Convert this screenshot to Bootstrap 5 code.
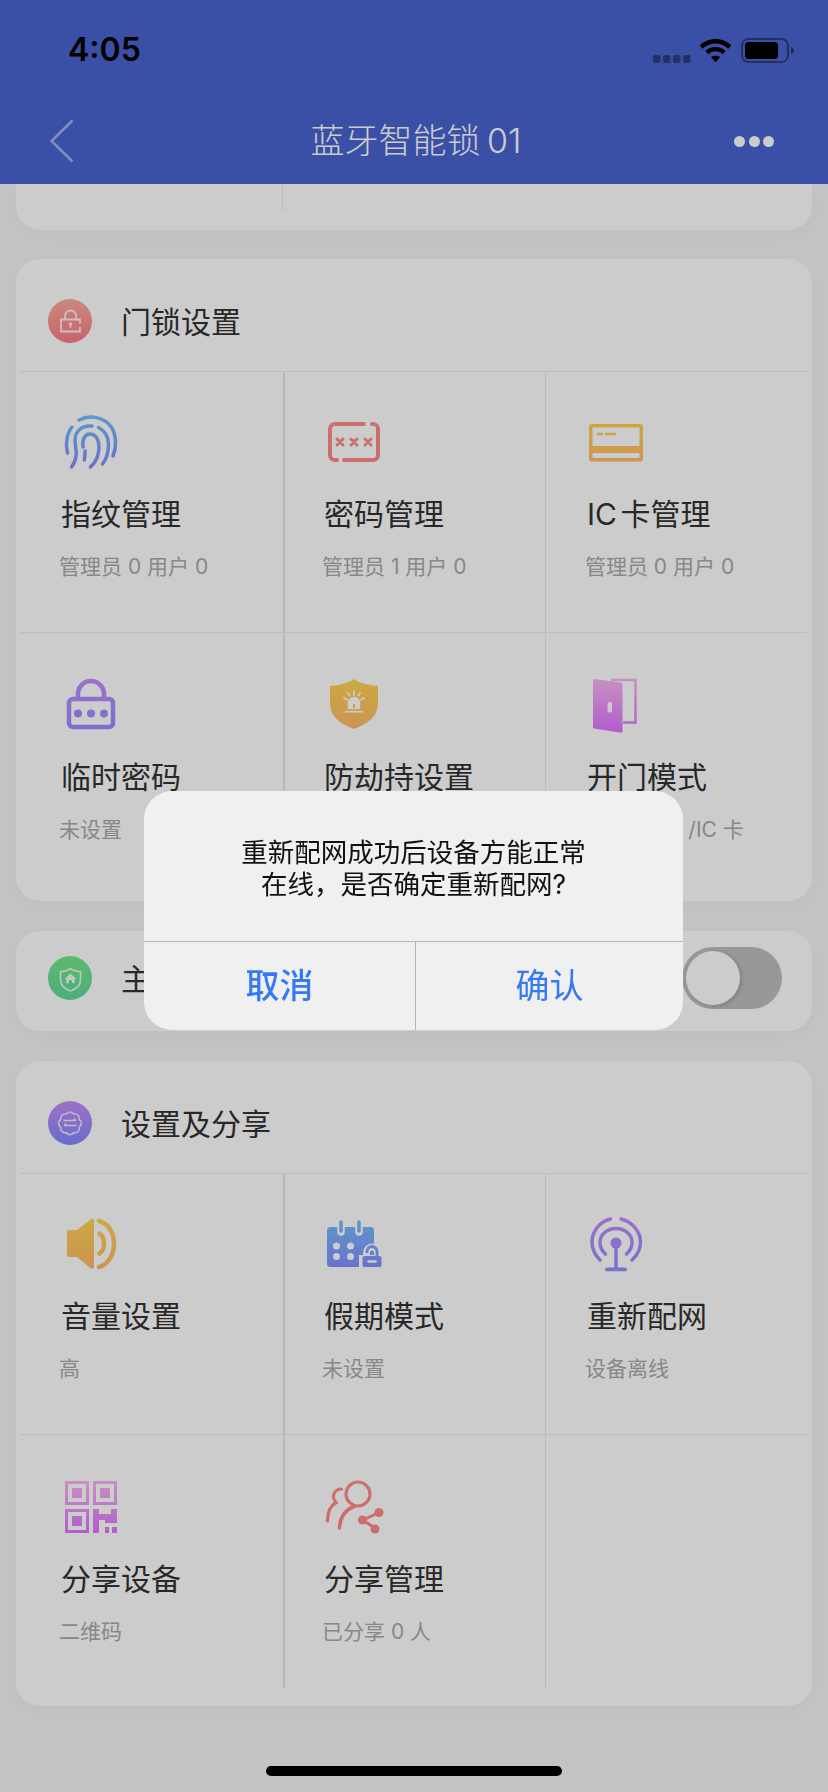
<!DOCTYPE html>
<html lang="zh-CN">
<head>
  <meta charset="UTF-8">
  <meta name="viewport" content="width=device-width, initial-scale=1.0">
  <title>蓝牙智能锁01</title>
  <link href="https://cdn.jsdelivr.net/npm/bootstrap@5.3.0/dist/css/bootstrap.min.css" rel="stylesheet">
  <style>
    html, body {
      margin: 0;
      height: 1792px;
    }
    body {
      position: relative;
      overflow: hidden;
      background: #f5f5f8;
      font-family: Inter, "Noto Sans CJK SC", sans-serif;
      color: #333;
    }
    .app-head {
      height: 184px;
      background: #4865d0;
      color: #fff;
    }
    .status-row {
      height: 100px;
      padding: 0 34px 0 68px;
    }
    .clock {
      font-size: 32px;
      font-weight: 600;
      color: #000;
      line-height: 1;
    }
    .nav-row {
      height: 84px;
      padding: 0 54px 2px 50px;
    }
    .nav-back {
      width: 48px;
    }
    .nav-title {
      font-size: 34px;
      font-weight: 300;
      line-height: 1.2;
      word-spacing: -3px;
    }
    .dot-menu {
      width: 40px;
      height: 11px;
    }
    .dot-menu span {
      width: 11px;
      height: 11px;
      background: #fff;
    }
    .panel {
      margin: 0 16px;
      border: 0;
      border-radius: 24px;
      background: #fff;
      box-shadow: 0 4px 22px rgba(0, 0, 0, .03);
    }
    .panel-stub {
      height: 46px;
      padding: 0 5px;
      border-radius: 0 0 24px 24px;
    }
    .stub-line {
      width: 262px;
      height: 27px;
      border-right: 1px solid #ebebeb;
    }
    .panel-grid {
      margin-top: 29px;
      padding: 0 5px 15px;
    }
    .panel-last {
      margin-top: 30px;
      padding-bottom: 18px;
    }
    .panel-head {
      height: 113px;
      padding: 11px 0 0 27px;
      border-bottom: 1px solid #ebebeb;
    }
    .round-ico {
      width: 44px;
      height: 44px;
      flex: none;
    }
    .head-name {
      margin: 3px 0 0 29px;
      font-size: 30px;
      line-height: 40px;
    }
    .tile {
      height: 261px;
      padding: 44px 0 0 40px;
      border-bottom: 1px solid #ebebeb;
    }
    .tile-low {
      height: 253px;
      padding-top: 46px;
      border-bottom: 0;
    }
    .tile svg {
      display: block;
      overflow: visible;
      margin-left: 1px;
    }
    .tile-line {
      padding-left: 41px;
      border-left: 1px solid #ebebeb;
    }
    .tile-line svg {
      margin-left: 0;
    }
    .tile-line-wide {
      padding-left: 39px;
      border-left: 2px solid #e6e6e6;
    }
    .tile-name {
      margin-top: 24px;
      font-size: 30px;
      line-height: 40px;
      white-space: nowrap;
      word-spacing: -5px;
    }
    .tile-sub {
      margin: 18px 0 0 -2px;
      font-size: 21px;
      line-height: 30px;
      color: #aaa;
      white-space: nowrap;
    }
    .panel-switch {
      height: 100px;
      margin-top: 30px;
      padding: 0 30px 7px 32px;
    }
    .panel-switch .head-name {
      margin-top: 2px;
    }
    .toggle-off {
      width: 100px;
      height: 62px;
      padding: 4px;
      border-radius: 31px;
      background: #bfbfbf;
    }
    .toggle-off span {
      width: 54px;
      height: 54px;
      background: #fff;
      box-shadow: 2px 1px 4px rgba(0, 0, 0, .18);
    }
    .home-bar {
      left: 266px;
      top: 1766px;
      width: 296px;
      height: 10px;
      z-index: 1056;
      background: #000;
    }
    .modal-backdrop {
      --bs-backdrop-opacity: .2;
      width: 828px;
      height: 1792px;
    }
    .alert-box {
      left: 144px;
      top: 791px;
      width: 539px;
      height: 239px;
      z-index: 1055;
      border-radius: 28px;
      background: #f0f0f0;
      overflow: hidden;
    }
    .alert-text {
      height: 150px;
      padding-top: 45px;
      font-size: 26.5px;
      line-height: 32px;
      color: #111;
      text-align: center;
    }
    .alert-foot {
      height: 89px;
      border-top: 1px solid #b6b6b6;
    }
    .alert-btn {
      flex: 1 1 0;
      border: 0;
      border-radius: 0;
      padding: 0;
      font-size: 34px;
      line-height: 1.2;
      color: #3579f6;
    }
    .alert-btn.fw-medium {
      flex: 0 0 271px;
      font-weight: 500;
    }
    .alert-btn + .alert-btn {
      border-left: 1px solid #b6b6b6;
    }
  </style>
</head>
<body>
  <!-- shared gradients for the icons -->
  <svg class="position-absolute" width="0" height="0" aria-hidden="true">
    <defs>
      <linearGradient id="gBlue" gradientUnits="userSpaceOnUse" x1="0" y1="0" x2="0" y2="54"><stop offset="0" stop-color="#72c0ff"/><stop offset="1" stop-color="#888aff"/></linearGradient>
      <linearGradient id="gRed" gradientUnits="userSpaceOnUse" x1="0" y1="0" x2="0" y2="54"><stop offset="0" stop-color="#ff8f8c"/><stop offset="1" stop-color="#ff8886"/></linearGradient>
      <linearGradient id="gGold" gradientUnits="userSpaceOnUse" x1="0" y1="0" x2="0" y2="54"><stop offset="0" stop-color="#ffd452"/><stop offset="1" stop-color="#ffb86a"/></linearGradient>
      <linearGradient id="gViolet" gradientUnits="userSpaceOnUse" x1="0" y1="0" x2="0" y2="54"><stop offset="0" stop-color="#c48cff"/><stop offset="1" stop-color="#938eff"/></linearGradient>
      <linearGradient id="gPink" gradientUnits="userSpaceOnUse" x1="0" y1="0" x2="0" y2="54"><stop offset="0" stop-color="#fcb4f4"/><stop offset="1" stop-color="#dc74ff"/></linearGradient>
      <linearGradient id="cRed" x1="0" y1="0" x2="0" y2="1"><stop offset="0" stop-color="#ffaa9f"/><stop offset="1" stop-color="#fa7d84"/></linearGradient>
      <linearGradient id="cGreen" x1="0" y1="0" x2="0" y2="1"><stop offset="0" stop-color="#74ea86"/><stop offset="1" stop-color="#5dd99f"/></linearGradient>
      <linearGradient id="cPurple" x1="0" y1="0" x2="0" y2="1"><stop offset="0" stop-color="#c88cf8"/><stop offset="1" stop-color="#8288ff"/></linearGradient>
    </defs>
  </svg>

  <header class="app-head">
    <div class="status-row d-flex align-items-center justify-content-between">
      <span class="clock">4:05</span>
      <svg width="141" height="25" viewBox="653 37 141 25">
        <g fill="#000" fill-opacity=".38">
          <rect x="653" y="54" width="7.500" height="8" rx="2"/><rect x="663" y="54" width="7.500" height="8" rx="2"/><rect x="673" y="54" width="7.500" height="8" rx="2"/><rect x="683" y="54" width="7.500" height="8" rx="2"/>
        </g>
        <path d="M715.500 38c6.300 0 11.800 2.500 15.800 6.500l-3 3.200c-3.300-3.200-7.800-5.200-12.800-5.200s-9.500 2-12.800 5.200l-3-3.200c4-4 9.500-6.500 15.800-6.500z"/>
        <path d="M715.500 46c4 0 7.500 1.500 10.100 4l-3 3.200c-1.800-1.800-4.300-2.900-7.100-2.900s-5.300 1.100-7.100 2.900l-3-3.200c2.600-2.500 6.100-4 10.100-4z"/>
        <path d="M715.500 54.500c1.800 0 3.400 .7 4.500 1.800l-4.500 5-4.500-5c1.100-1.100 2.700-1.800 4.500-1.800z"/>
        <rect x="742" y="38" width="46" height="23" rx="6.500" fill="none" stroke="#000" stroke-opacity=".4" stroke-width="2"/>
        <rect x="745" y="41" width="33" height="17" rx="3.500"/>
        <path d="M791 46c2 .500 3 2 3 3.500s-1 3-3 3.500z" fill="#000" fill-opacity=".45"/>
      </svg>
    </div>
    <nav class="nav-row d-flex align-items-center">
      <div class="nav-back">
        <svg class="d-block" width="24" height="44" viewBox="0 0 24 44"><path d="M22.500 1.500 1.500 22l21 20.500" fill="none" stroke="#fff" stroke-opacity=".5" stroke-width="2.500"/></svg>
      </div>
      <div class="nav-title flex-grow-1 text-center">蓝牙智能锁 01</div>
      <div class="dot-menu d-flex justify-content-between">
        <span class="rounded-circle"></span><span class="rounded-circle"></span><span class="rounded-circle"></span>
      </div>
    </nav>
  </header>

  <div class="card panel panel-stub">
    <div class="stub-line"></div>
  </div>

  <!-- 门锁设置 -->
  <section class="card panel panel-grid">
    <div class="panel-head d-flex align-items-center">
      <svg class="round-ico" viewBox="0 0 44 44">
        <circle cx="22" cy="22" r="22" fill="url(#cRed)"/>
        <path d="M32 28v4.500H13V20.500h19v4" fill="none" stroke="#fff" stroke-opacity=".85" stroke-width="1.800"/>
        <path d="M17 20v-3a5.500 5.500 0 0 1 11 0v3" fill="none" stroke="#fff" stroke-opacity=".85" stroke-width="1.800"/>
        <circle cx="22.500" cy="25" r="1.800" fill="#fff" fill-opacity=".85"/><path d="M22.500 26v3" stroke="#fff" stroke-opacity=".85" stroke-width="1.400"/>
      </svg>
      <span class="head-name">门锁设置</span>
    </div>
    <div class="row g-0">
      <div class="col-4 tile">
        <svg width="60" height="54" viewBox="0 0 60 54" fill="none" stroke="url(#gBlue)" stroke-width="3.500" stroke-linecap="round">
          <path d="M17 4C27-1 42 0 50 12c4 7 5 18 1 28"/>
          <path d="M10 11C5 17 3 28 5.500 37"/>
          <path d="M30 10C20 9 13 15 13 24c0 6 2 11 1 16-.5 4-2 8-4.500 11"/>
          <path d="M36.500 11.500C43 15 46.500 21 46.500 28c0 8-2 15-6 20"/>
          <path d="M21 31c-1-8 2-13 7-13 6 0 9 6 9 13 0 8-3 15-8.500 20"/>
          <path d="M23 35c0 3 0 6-.7 9"/>
        </svg>
        <div class="tile-name">指纹管理</div>
        <div class="tile-sub">管理员 0 用户 0</div>
      </div>
      <div class="col-4 tile tile-line-wide">
        <svg width="60" height="54" viewBox="0 0 60 54" fill="none" stroke="url(#gRed)" stroke-width="4" stroke-linecap="round">
          <path d="M39 8H10a5 5 0 0 0-5 5v26a5 5 0 0 0 5 5h2"/>
          <path d="M19 44h29a5 5 0 0 0 5-5V13a5 5 0 0 0-5-5h-1"/>
          <path stroke-width="3" d="M12 23l6 6m0-6l-6 6M26 23l6 6m0-6l-6 6M40 23l6 6m0-6l-6 6"/>
        </svg>
        <div class="tile-name">密码管理</div>
        <div class="tile-sub">管理员 1 用户 0</div>
      </div>
      <div class="col-4 tile tile-line">
        <svg width="60" height="54" viewBox="0 0 60 54">
          <rect x="2" y="8" width="54" height="37.500" rx="2.500" fill="url(#gGold)"/>
          <rect x="5.500" y="11.500" width="47" height="18.500" fill="#fff"/>
          <rect x="5.500" y="37" width="47" height="5" fill="#fff"/>
          <path d="M10 18h6M18 18h11" stroke="url(#gGold)" stroke-width="2.500"/>
        </svg>
        <div class="tile-name">IC 卡管理</div>
        <div class="tile-sub">管理员 0 用户 0</div>
      </div>
      <div class="col-4 tile tile-low">
        <svg width="60" height="54" viewBox="0 0 60 54">
          <path d="M16 20v-5a13 13 0 0 1 26 0v5" fill="none" stroke="url(#gViolet)" stroke-width="4.500"/>
          <rect x="7" y="20" width="44" height="28" rx="4" fill="none" stroke="url(#gViolet)" stroke-width="4.500"/>
          <g fill="url(#gViolet)"><circle cx="16" cy="34.500" r="4"/><circle cx="29" cy="34.500" r="4"/><circle cx="42" cy="34.500" r="4"/></g>
        </svg>
        <div class="tile-name">临时密码</div>
        <div class="tile-sub">未设置</div>
      </div>
      <div class="col-4 tile tile-low tile-line-wide">
        <svg width="60" height="54" viewBox="0 0 60 54">
          <path d="M29 0c7 5 16 6 24 7v17c0 14-11 21-24 26C16 45 5 38 5 24V7c8-1 17-2 24-7z" fill="url(#gGold)"/>
          <path d="M23.500 29.500v-5.500a5.500 5.500 0 0 1 11 0v5.500zM20 32.800h18" fill="#fff" stroke="#fff" stroke-width="1.500"/>
          <path d="M29 12v4M19 19l3 1.500M39 19l-3 1.500M23 14l1.500 2.500M35 14l-1.500 2.500" stroke="#fff" stroke-width="1.800" stroke-linecap="round"/>
          <path d="M29 25v4" stroke="url(#gGold)" stroke-width="2"/>
        </svg>
        <div class="tile-name">防劫持设置</div>
      </div>
      <div class="col-4 tile tile-low tile-line">
        <svg width="60" height="54" viewBox="0 0 60 54">
          <path d="M24 1h24.500v42.500H36" fill="none" stroke="url(#gPink)" stroke-width="2.500"/>
          <path d="M7 0l27 3.500a1.500 1.500 0 0 1 1.500 1.500v47.500a1.200 1.200 0 0 1-1.500 1.200L7 49.500a1.500 1.500 0 0 1-1-1.500V1a1 1 0 0 1 1-1z" fill="url(#gPink)"/>
          <rect x="20.500" y="23" width="4.500" height="10.500" rx="2" fill="#fff"/>
        </svg>
        <div class="tile-name">开门模式</div>
        <div class="tile-sub">指纹/密码&nbsp;&nbsp;/IC 卡</div>
      </div>
    </div>
  </section>

  <!-- 主 switch row -->
  <section class="card panel panel-switch flex-row align-items-center">
    <svg class="round-ico" viewBox="0 0 44 44">
      <circle cx="22" cy="22" r="22" fill="url(#cGreen)"/>
      <path d="M22.500 12.500c2.500 2 6 3 10 3.200V24c0 5.500-4.500 9-10 11-5.500-2-10-5.500-10-11v-8.300c4-.2 7.500-1.200 10-3.200z" fill="none" stroke="#fff" stroke-opacity=".8" stroke-width="1.700"/>
      <path d="M22.500 17.500l6 5.500h-1.800v4.200h-2.700v-3h-3v3h-2.700V23h-1.800z" fill="#fff" fill-opacity=".9"/>
    </svg>
    <span class="head-name">主</span>
    <div class="toggle-off ms-auto"><span class="d-block rounded-circle"></span></div>
  </section>

  <!-- 设置及分享 -->
  <section class="card panel panel-grid panel-last">
    <div class="panel-head d-flex align-items-center">
      <svg class="round-ico" viewBox="0 0 44 44">
        <circle cx="22" cy="22" r="22" fill="url(#cPurple)"/>
        <path d="M31.200 18.500A4.400 4.400 0 0 1 31.200 26.100 4.400 4.400 0 0 1 25.800 31.500 4.400 4.400 0 0 1 18.200 31.500 4.400 4.400 0 0 1 12.800 26.100 4.400 4.400 0 0 1 12.800 18.500 4.400 4.400 0 0 1 18.200 13.100 4.400 4.400 0 0 1 25.800 13.100 4.400 4.400 0 0 1 31.200 18.500z" fill="none" stroke="#fff" stroke-opacity=".8" stroke-width="1.500"/>
        <path d="M15.500 19.500H28M25.500 17.500l2.500 2M28.500 24.500H16M18.500 22.500l-2.500 2" fill="none" stroke="#fff" stroke-opacity=".85" stroke-width="1.600"/>
      </svg>
      <span class="head-name">设置及分享</span>
    </div>
    <div class="row g-0">
      <div class="col-4 tile">
        <svg width="60" height="54" viewBox="0 0 60 54">
          <path d="M7 12h8L29 1a2 2 0 0 1 3 1.500v46.500a2 2 0 0 1-3 1.500L15 39H7a2 2 0 0 1-2-2V14a2 2 0 0 1 2-2z" fill="url(#gGold)"/>
          <path d="M37 3c10 3 15 12 15 22.500S47 46 37 49M37.500 15.500c3 2 4.500 6 4.500 10s-1.500 8-4.500 10" fill="none" stroke="url(#gGold)" stroke-width="4.500" stroke-linecap="round"/>
        </svg>
        <div class="tile-name">音量设置</div>
        <div class="tile-sub">高</div>
      </div>
      <div class="col-4 tile tile-line-wide">
        <svg width="60" height="54" viewBox="0 0 60 54">
          <rect x="2" y="9" width="47" height="40" rx="3.500" fill="url(#gBlue)"/>
          <path d="M16 5v9M34 5v9" stroke="#fff" stroke-width="7.500" stroke-linecap="round"/>
          <path d="M16 4v9M34 4v9" stroke="url(#gBlue)" stroke-width="3.500" stroke-linecap="round"/>
          <g fill="#fff"><circle cx="11.500" cy="28" r="3.500"/><circle cx="25.500" cy="28" r="3.500"/><circle cx="11.500" cy="38.500" r="3.500"/><circle cx="25.500" cy="38.500" r="3.500"/></g>
          <path d="M41.500 38v-3.500a5.500 5.500 0 0 1 11 0V38" fill="none" stroke="#fff" stroke-width="7"/>
          <rect x="34" y="37" width="25" height="15" fill="#fff"/>
          <rect x="37.500" y="38" width="19" height="11" rx="2" fill="url(#gBlue)"/>
          <path d="M42 35v-1.500a5 5 0 0 1 10 0V38" fill="none" stroke="url(#gBlue)" stroke-width="2.800"/>
          <path d="M43.500 43.500h7" stroke="#fff" stroke-width="2.500" stroke-linecap="round"/>
        </svg>
        <div class="tile-name">假期模式</div>
        <div class="tile-sub">未设置</div>
      </div>
      <div class="col-4 tile tile-line">
        <svg width="60" height="54" viewBox="0 0 60 54" fill="none" stroke="url(#gViolet)" stroke-linecap="round">
          <path stroke-width="3.500" d="M23.500 1C13 3.500 5 13 5 24c0 7 3 13 8 18M34 1c10.500 2.500 19.500 12 19.500 23 0 7-3 13-8.500 18"/>
          <path stroke-width="3.500" d="M18.500 36c-3.500-3-5.500-7-5.500-11.500C13 16.500 20 10.500 29 10.500s16 6 16 14c0 4.500-2 8.500-5.500 11.500"/>
          <circle cx="29" cy="25" r="5.500" fill="url(#gViolet)" stroke="none"/>
          <path stroke-width="3.500" stroke-linecap="butt" d="M29 28v23"/>
          <path stroke-width="3.800" d="M20 51.300h18"/>
        </svg>
        <div class="tile-name">重新配网</div>
        <div class="tile-sub">设备离线</div>
      </div>
      <div class="col-4 tile tile-low">
        <svg width="60" height="54" viewBox="0 0 60 54">
          <g fill="none" stroke="url(#gPink)" stroke-width="3">
            <rect x="4.500" y="1.500" width="21" height="21"/><rect x="32.500" y="1.500" width="21" height="21"/><rect x="4.500" y="29.500" width="21" height="21"/>
          </g>
          <g fill="url(#gPink)">
            <rect x="10" y="7" width="10" height="10"/><rect x="38" y="7" width="10" height="10"/><rect x="10" y="35" width="10" height="10"/>
            <rect x="31" y="28" width="6" height="24"/><rect x="37" y="33" width="8" height="6"/><rect x="43" y="33" width="6" height="9"/><rect x="49" y="28" width="6" height="14"/>
            <rect x="43" y="46" width="4" height="6"/><rect x="50" y="46" width="5" height="6"/>
          </g>
        </svg>
        <div class="tile-name">分享设备</div>
        <div class="tile-sub">二维码</div>
      </div>
      <div class="col-4 tile tile-low tile-line-wide">
        <svg width="60" height="54" viewBox="0 0 60 54" fill="none" stroke="url(#gRed)" stroke-linecap="round">
          <circle cx="33" cy="13" r="12" stroke-width="3.200"/>
          <path stroke-width="3.500" d="M29 25.500C20 29 15 36 14.500 47"/>
          <path stroke-width="3.200" d="M16.500 8C9 8 6 16 11 21.500 5 25 2.500 32 2.500 40"/>
          <path stroke-width="3" d="M53 32 38 39l13 9"/>
          <g fill="url(#gRed)" stroke="none"><circle cx="54" cy="31.500" r="4.500"/><circle cx="37.500" cy="39" r="4.500"/><circle cx="50" cy="48" r="4.500"/></g>
        </svg>
        <div class="tile-name">分享管理</div>
        <div class="tile-sub">已分享 0 人</div>
      </div>
      <div class="col-4 tile tile-low tile-line"></div>
    </div>
  </section>

  <div class="modal-backdrop show"></div>

  <div class="alert-box position-absolute d-flex flex-column">
    <div class="alert-text">重新配网成功后设备方能正常<br>在线，是否确定重新配网?</div>
    <div class="alert-foot d-flex">
      <button type="button" class="btn alert-btn fw-medium">取消</button>
      <button type="button" class="btn alert-btn">确认</button>
    </div>
  </div>

  <div class="home-bar position-absolute rounded-pill"></div>

  <script src="https://cdn.jsdelivr.net/npm/bootstrap@5.3.0/dist/js/bootstrap.bundle.min.js"></script>
</body>
</html>
